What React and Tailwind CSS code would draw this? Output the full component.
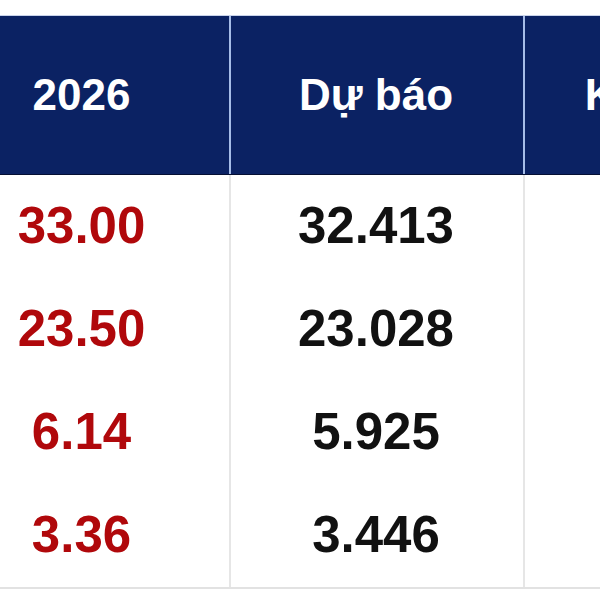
import React from "react";

const rows = [
  ["33.00", "32.413"],
  ["23.50", "23.028"],
  ["6.14", "5.925"],
  ["3.36", "3.446"],
];

export default function App() {
  return (
    <div className="w-[600px] h-[600px] bg-white overflow-hidden pt-[15px]" style={{ fontFamily: '"Liberation Sans", Arial, sans-serif' }}>
      <div className="ml-[-64px] w-[900px]">
        <div className="grid grid-cols-[295px_294px_293px] h-[160px] bg-[#0b2263] border-t border-[#c9d3ea] border-b border-b-[#050f33] text-white font-bold text-[44px]">
          <div className="flex items-center justify-center border-r-2 border-[#a6bde8] pr-[2px]">2026</div>
          <div className="flex items-center justify-center border-r-2 border-[#a6bde8] pr-[2px]">Dự báo</div>
          <div className="flex items-center justify-center whitespace-nowrap">KH 2026</div>
        </div>
        <div className="border-b-2 border-[#e2e2e2]">
          {rows.map((r, i) => (
            <div key={i} className="grid grid-cols-[295px_294px_293px] h-[103px] font-bold text-[51px]">
              <div className="flex items-center justify-center border-r-2 border-[#e6e6e6] pr-[2px] text-[#b0080b]">{r[0]}</div>
              <div className="flex items-center justify-center border-r-2 border-[#e6e6e6] pr-[2px] text-[#111111]">{r[1]}</div>
              <div />
            </div>
          ))}
        </div>
      </div>
    </div>
  );
}
